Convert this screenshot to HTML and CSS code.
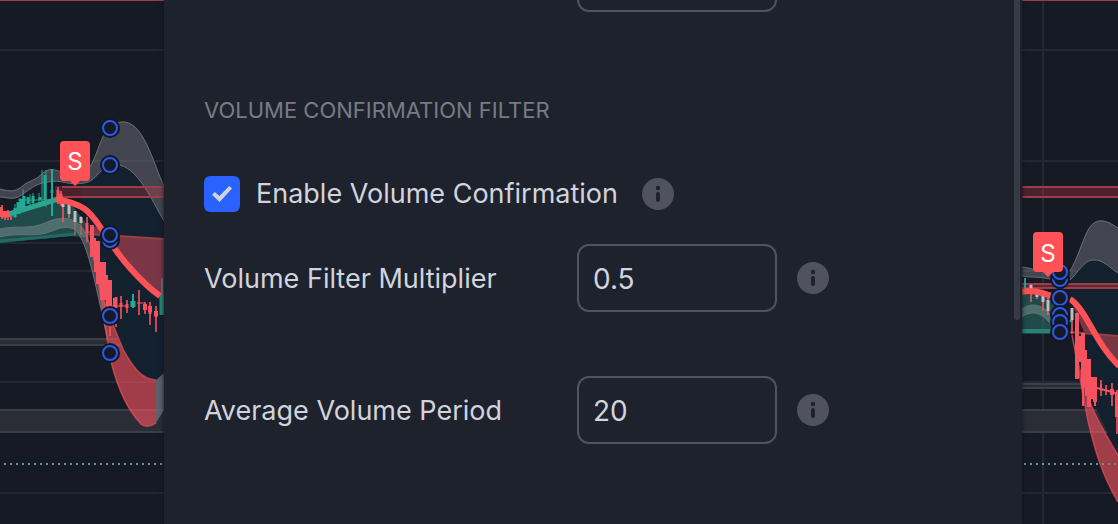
FILE: index.html
```html
<!DOCTYPE html>
<html lang="en">

<head>
    <meta charset="UTF-8">
    <meta name="viewport" content="width=device-width, initial-scale=1.0">
    <title>Indicator Settings</title>
    <link rel="stylesheet" href="styles.css">
</head>

<body>
    <svg class="icon-defs" aria-hidden="true">
        <symbol id="icon-info" viewBox="0 0 32 32">
            <circle cx="16" cy="16" r="16" fill="#50535e" />
            <circle cx="16" cy="10" r="2.2" fill="#1e222d" />
            <path d="M16 16v6" stroke="#1e222d" stroke-width="4" stroke-linecap="round" />
        </symbol>
        <g id="handle">
            <circle r="10" fill="#131722" />
            <circle r="7" fill="#141a29" stroke="#2b5ae6" stroke-width="2" />
        </g>
    </svg>

    <div class="workspace">
        <div class="chart">
            <svg width="164" height="524" viewBox="0 0 164 524" fill="none" aria-hidden="true">
                <!-- Grid -->
                <path class="grid-line" d="M0 50H164M0 161H164M0 243H164M0 271H164M0 382H164M0 493H164" />
                <path class="red-edge" d="M0 0H164" />

                <!-- Zones -->
                <path class="zone" d="M0 339H164V345H0ZM0 409H164V432H0Z" />
                <path class="zone-edge" d="M0 339H164M0 345H164M0 410H164M0 432H164" />

                <!-- Bands -->
                <path fill="#13202e" d="M80 184C94 179 101 166 111 165C135 160 151 199 164 221V374C157 379 154 381 149 379C133 378 121 345 112 328L98 257L86 220Z" />
                <path class="gray-band" d="M0 189C12 192 16 192 25 184C34 179 36 180 44 172C51 167 58 171 64 173H83C99 167 98 122 121 122C143 119 153 163 164 186V221C151 199 135 160 111 165C101 166 96 182 84 183C68 186 62 179 48 182C32 183 23 197 15 198C9 199 5 197 0 197Z" />
                <path class="gray-edge" d="M0 189C12 192 16 192 25 184C34 179 36 180 44 172C51 167 58 171 64 173H83C99 167 98 122 121 122C143 119 153 163 164 186M0 197C5 197 9 199 15 198C23 197 32 183 48 182C62 179 68 186 84 183C96 182 101 166 111 165C135 160 151 199 164 221" />
                <path fill="#2f8f80" fill-opacity=".42" d="M0 216L10 214L57 200L72 205L88 226L90 238L70 236L0 243Z" />
                <path stroke="#216c62" stroke-width="3" d="M0 241L45 237L76 234" />
                <path class="gray-band lower" d="M0 229C15 225 30 230 45 223C58 217 70 216 79 224C91 235 94 263 105 307L108 340C94 280 88 240 74 229C61 224 54 232 42 234C28 236 14 233 0 237Z" />
                <path class="gray-edge" d="M0 229C15 225 30 230 45 223C58 217 70 216 79 224C91 235 94 263 105 307M0 237C14 233 28 236 42 234C54 232 61 224 74 229C88 240 94 280 108 340" />
                <path fill="#f23645" fill-opacity=".25" d="M55 186H164V198H55Z" />
                <path class="red-edge" d="M62 187H164M62 197H164" />
                <path fill="#f7525f" fill-opacity=".45" d="M86 233L164 239V296H158C140 283 116 256 106 235L98 225Z" />
                <path class="red-edge" d="M88 234L164 239" />
                <path fill="#f7525f" fill-opacity=".62" d="M93 255C102 300 113 325 123 349C136 373 144 379 156 380V423C151 427 144 427 141 424C121 403 112 370 107 343Z" />
                <path stroke="#e5505a" stroke-opacity=".7" stroke-width="1.500" d="M93 255C102 300 113 325 123 349C136 373 144 379 156 380M107 343C112 370 121 403 141 424C144 427 151 427 156 423" />
                <path fill="#6d6f77" fill-opacity=".8" d="M156 380L164 373V410L156 423Z" />

                <!-- Candles -->
                <path stroke="#22ab94" d="M15 204V218M20 198V214M23 189V211M30 194V206M33 193V206M39 193V204M42 170V206M45 177V197M46 170V207M18 200H50" />
                <path stroke="#22ab94" stroke-width="2" d="M52 169V216M133 294V308" />
                <path class="candle up" d="M15 208V217M18 202V214M21 199V212M24 196V210M28 197V204M33 196V203M40 197V200M45 175V200M52 190V193" />
                <path stroke="#22ab94" stroke-width="5" d="M133 301V307" />
                <path stroke="#6d6f77" stroke-width="2" d="M162 278V296" />
                <path stroke="#2b8376" stroke-width="5" d="M162 295V315" />
                <path class="wick down" d="M2 205V219M5 211V220M8 210V220M11 211V220M58 187V204M61 191V206M63 199V222M69 203V218M87 217V242M110 305V336M121 296V319M127 300V313M139 290V315M145 302V314M150 302V325M156 306V332M116 324V327" />
                <path class="candle down" d="M1 207V216M5 213V218M58 190V199M61 194V204M87 223V233M116 297V308M121 303V307M127 304V308M145 304V310M150 307V314M156 311V317" />
                <path stroke="#f7525f" stroke-width="4" d="M92 225V257M98 241V284M104 262V300M110 280V308M115 298V308M145 304V310M150 306V312M156 311V316" />
                <path stroke="#f7525f" stroke-width="2" d="M95 238V272M101 262V300M107 275V310" />
                <path stroke="#f7525f" d="M75 213V235M81 216V235M137 303H145M112 306H127" />
                <path stroke="#c3bbbf" stroke-width="3" d="M63 204V207M69 205V214M75 211V222M81 217V223" />

                <!-- Moving average -->
                <path stroke="#2aa58f" stroke-width="5" d="M9 214L58 199" />
                <path stroke="#ff5257" stroke-width="6" d="M0 214H10M56 199C90 205 91 215 106 235C119 258 143 284 160 296" />

                <path class="price-line" d="M4 464H164" />

                <!-- Signal label -->
                <path fill="#ff5257" d="M64 141H86Q90 141 90 145V177Q90 181 86 181H80L75 186L70 181H64Q60 181 60 177V145Q60 141 64 141Z" />
                <text class="signal" x="75" y="170">S</text>

                <!-- Drag handles -->
                <use href="#handle" x="110" y="128" />
                <use href="#handle" x="110" y="165" />
                <use href="#handle" x="110" y="240" />
                <use href="#handle" x="110" y="235" />
                <use href="#handle" x="110" y="316" />
                <use href="#handle" x="110" y="353" />
            </svg>
        </div>

        <main class="dialog">
            <form class="settings">
                <div class="row row-clipped">
                    <input class="field" type="text" aria-label="Previous setting">
                </div>

                <h2 class="section-title">VOLUME CONFIRMATION FILTER</h2>

                <div class="check-row">
                    <label class="check-label">
                        <input class="checkbox" type="checkbox" checked>
                        Enable Volume Confirmation
                    </label>
                    <button class="info" type="button" aria-label="About volume confirmation"><svg><use href="#icon-info" /></svg></button>
                </div>

                <div class="row">
                    <label class="row-label" for="multiplier">Volume Filter Multiplier</label>
                    <input class="field" id="multiplier" type="text" value="0.5">
                    <button class="info" type="button" aria-label="About multiplier"><svg><use href="#icon-info" /></svg></button>
                </div>

                <div class="row">
                    <label class="row-label" for="period">Average Volume Period</label>
                    <input class="field" id="period" type="text" value="20">
                    <button class="info" type="button" aria-label="About period"><svg><use href="#icon-info" /></svg></button>
                </div>
            </form>
            <div class="scroll-thumb"></div>
        </main>

        <div class="chart">
            <svg width="96" height="524" viewBox="1022 0 96 524" fill="none" aria-hidden="true">
                <!-- Grid -->
                <path class="grid-line" d="M1022 50H1118M1022 161H1118M1022 271H1118M1022 382H1118M1022 493H1118M1043 0V524" />
                <path class="red-edge" d="M1022 0H1118" />

                <!-- Zones -->
                <path fill="#f23645" fill-opacity=".25" d="M1022 186H1118V198H1022Z" />
                <path class="red-edge" d="M1022 187H1118M1022 197H1118" />
                <path class="zone" d="M1022 384H1118V388H1022ZM1022 410H1118V432H1022Z" />
                <path class="zone-edge" d="M1022 384H1118M1022 388H1118M1022 410H1118M1022 432H1118" />

                <!-- Bands -->
                <path fill="#13202e" d="M1070 280C1078 273 1084 260 1093 260C1103 259 1110 268 1118 273V455L1088 390L1074 310Z" />
                <path class="gray-band" d="M1022 267C1033 268 1035 272 1050 271H1070C1083 249 1085 223 1099 221C1107 220 1113 225 1118 228V273C1110 268 1103 259 1093 260C1084 260 1078 273 1070 280L1050 279C1036 276 1032 278 1022 276Z" />
                <path class="gray-edge" d="M1022 267C1033 268 1035 272 1050 271H1070C1083 249 1085 223 1099 221C1107 220 1113 225 1118 228M1022 276C1032 278 1036 276 1050 279L1070 280C1078 273 1084 260 1093 260C1103 259 1110 268 1118 273" />
                <path fill="#2f8f80" fill-opacity=".42" d="M1022 291H1035L1055 299V334H1022Z" />
                <path stroke="#288275" stroke-width="4" d="M1022 331H1054" />
                <path class="gray-band lower" d="M1022 309C1032 302 1042 304 1053 317V327C1043 313 1033 309 1022 317Z" />
                <path class="gray-edge" d="M1022 309C1032 302 1042 304 1053 317M1022 317C1033 309 1043 313 1053 327" />
                <path fill="#f23645" fill-opacity=".35" d="M1022 284H1118V288H1022Z" />
                <path class="red-edge" d="M1022 284H1118M1022 288H1118" />
                <path fill="#f7525f" fill-opacity=".45" d="M1071 301L1084 332L1118 336V368C1098 346 1085 312 1071 301Z" />
                <path class="red-edge" d="M1070 332L1118 336" />
                <path fill="#f7525f" fill-opacity=".62" d="M1072 335L1085 387C1091 409 1101 426 1118 455V502C1102 475 1095 451 1088 421C1082 391 1077 360 1072 335Z" />
                <path stroke="#e5505a" stroke-opacity=".7" stroke-width="1.500" d="M1085 387C1091 409 1101 426 1118 455M1072 335C1077 360 1082 391 1088 421C1095 451 1102 475 1118 502" />

                <!-- Candles -->
                <path stroke="#22ab94" stroke-width="2" d="M1025 278V294M1068 314V322M1066 321H1073" />
                <path class="wick down" d="M1031 284V302M1037 293V299M1043 295V311M1048 298V315M1072 318V334M1101 380V396M1106 385V395M1112 383V406M1117 390V434" />
                <path stroke="#c3bbbf" stroke-width="3" d="M1031 285V289M1037 292V297M1043 296V302M1048 300V311M1072 308V320" />
                <path stroke="#f7525f" stroke-width="4" d="M1077 313V379M1083 333V387M1089 359V407M1095 377V402M1112 389V395M1117 392V417" />
                <path stroke="#f7525f" stroke-width="2" d="M1080 336V362M1083 370V406M1086 350V396M1092 377V399M1095 394V406M1101 384V391M1097 388L1116 393" />

                <!-- Moving average -->
                <path stroke="#ff5257" stroke-width="6" d="M1022 292C1033 289 1042 293 1055 297M1070 299C1087 310 1094 342 1119 366" />

                <path class="price-line" d="M1024 464H1118" />

                <!-- Drag handles -->
                <use href="#handle" x="1060" y="279" />
                <use href="#handle" x="1060" y="272" />
                <use href="#handle" x="1060" y="298" />
                <use href="#handle" x="1060" y="315" />
                <use href="#handle" x="1060" y="322" />
                <use href="#handle" x="1060" y="332" />

                <!-- Signal label -->
                <path fill="#ff5257" d="M1037 232H1059Q1063 232 1063 236V268Q1063 272 1059 272H1053L1048 277L1043 272H1037Q1033 272 1033 268V236Q1033 232 1037 232Z" />
                <text class="signal" x="1048" y="262">S</text>
            </svg>
        </div>
    </div>
</body>

</html>
```
FILE: styles.css
```css
* {
    box-sizing: border-box;
}

body {
    margin: 0;
    background: #161a25;
    color: #d1d4dc;
    font-family: Inter, "Liberation Sans", sans-serif;
    font-size: 27px;
    line-height: 36px;
}

.icon-defs {
    display: none;
}

.workspace {
    display: grid;
    grid-template-columns: 164px 1fr 96px;
    min-height: 100vh;
}

/* Chart */
.chart {
    overflow: hidden;
}

.chart svg {
    display: block;
}

.grid-line {
    stroke: #242833;
    stroke-width: 2;
}

.zone {
    fill: #2a2c36;
}

.zone-edge {
    stroke: #3b3e47;
    stroke-width: 2;
}

.red-edge {
    stroke: #9a3e47;
    stroke-width: 2;
}

.gray-band {
    fill: #787b86;
    fill-opacity: 0.45;
}

.lower {
    fill: #8fa39f;
    fill-opacity: 0.4;
}

.gray-edge {
    stroke: #6c6f78;
    stroke-width: 1;
}

.candle {
    stroke-width: 3;
}

.wick {
    stroke-width: 2;
    stroke-opacity: 0.8;
}

.up {
    stroke: #22ab94;
}

.down {
    stroke: #f7525f;
}

.price-line {
    stroke: #5c9b90;
    stroke-width: 2;
    stroke-dasharray: 2 4;
}

.signal {
    fill: #fff;
    font-size: 24px;
    text-anchor: middle;
}

/* Dialog */
.dialog {
    position: relative;
    background: #1e222d;
    box-shadow: 0 0 4px #10131b;
}

.settings {
    display: flex;
    flex-direction: column;
    padding: 0 40px;
}

.row {
    display: grid;
    grid-template-columns: 353px 200px 32px;
    column-gap: 20px;
    align-items: center;
    margin-bottom: 64px;
}

/* Only the bottom edge of this field is scrolled into view */
.row-clipped {
    height: 12px;
    margin-bottom: 86px;
    align-items: end;
    align-content: end;
    overflow: hidden;
}

.row-clipped .field {
    grid-column: 2;
}

.row-label {
    padding-top: 2px;
}

.field {
    width: 100%;
    height: 68px;
    padding: 2px 14px 0;
    border: 2px solid #50535e;
    border-radius: 12px;
    background: transparent;
    color: inherit;
    font: inherit;
    font-size: 28px;
}

.section-title {
    margin: 0 0 54px;
    color: #787b86;
    font-size: 22px;
    font-weight: 400;
    line-height: 24px;
}

.check-row {
    display: flex;
    align-items: center;
    gap: 24px;
    margin-bottom: 32px;
}

.check-label {
    display: flex;
    align-items: center;
    gap: 16px;
}

.checkbox {
    display: grid;
    place-items: center;
    width: 36px;
    height: 36px;
    margin: 0;
    border-radius: 6px;
    background: #2962ff;
    appearance: none;
}

.checkbox:checked::before {
    content: "";
    width: 20px;
    height: 16px;
    background: #d1d4dc;
    clip-path: polygon(0 54%, 14% 38%, 37% 62%, 86% 0, 100% 15%, 38% 100%);
}

.info {
    width: 32px;
    height: 32px;
    padding: 0;
    border: 0;
    background: none;
}

.info svg {
    display: block;
    width: 32px;
    height: 32px;
}

.scroll-thumb {
    position: absolute;
    top: 0;
    right: 2px;
    width: 6px;
    height: 61%;
    border-radius: 0 0 3px 3px;
    background: #363a45;
}
```
